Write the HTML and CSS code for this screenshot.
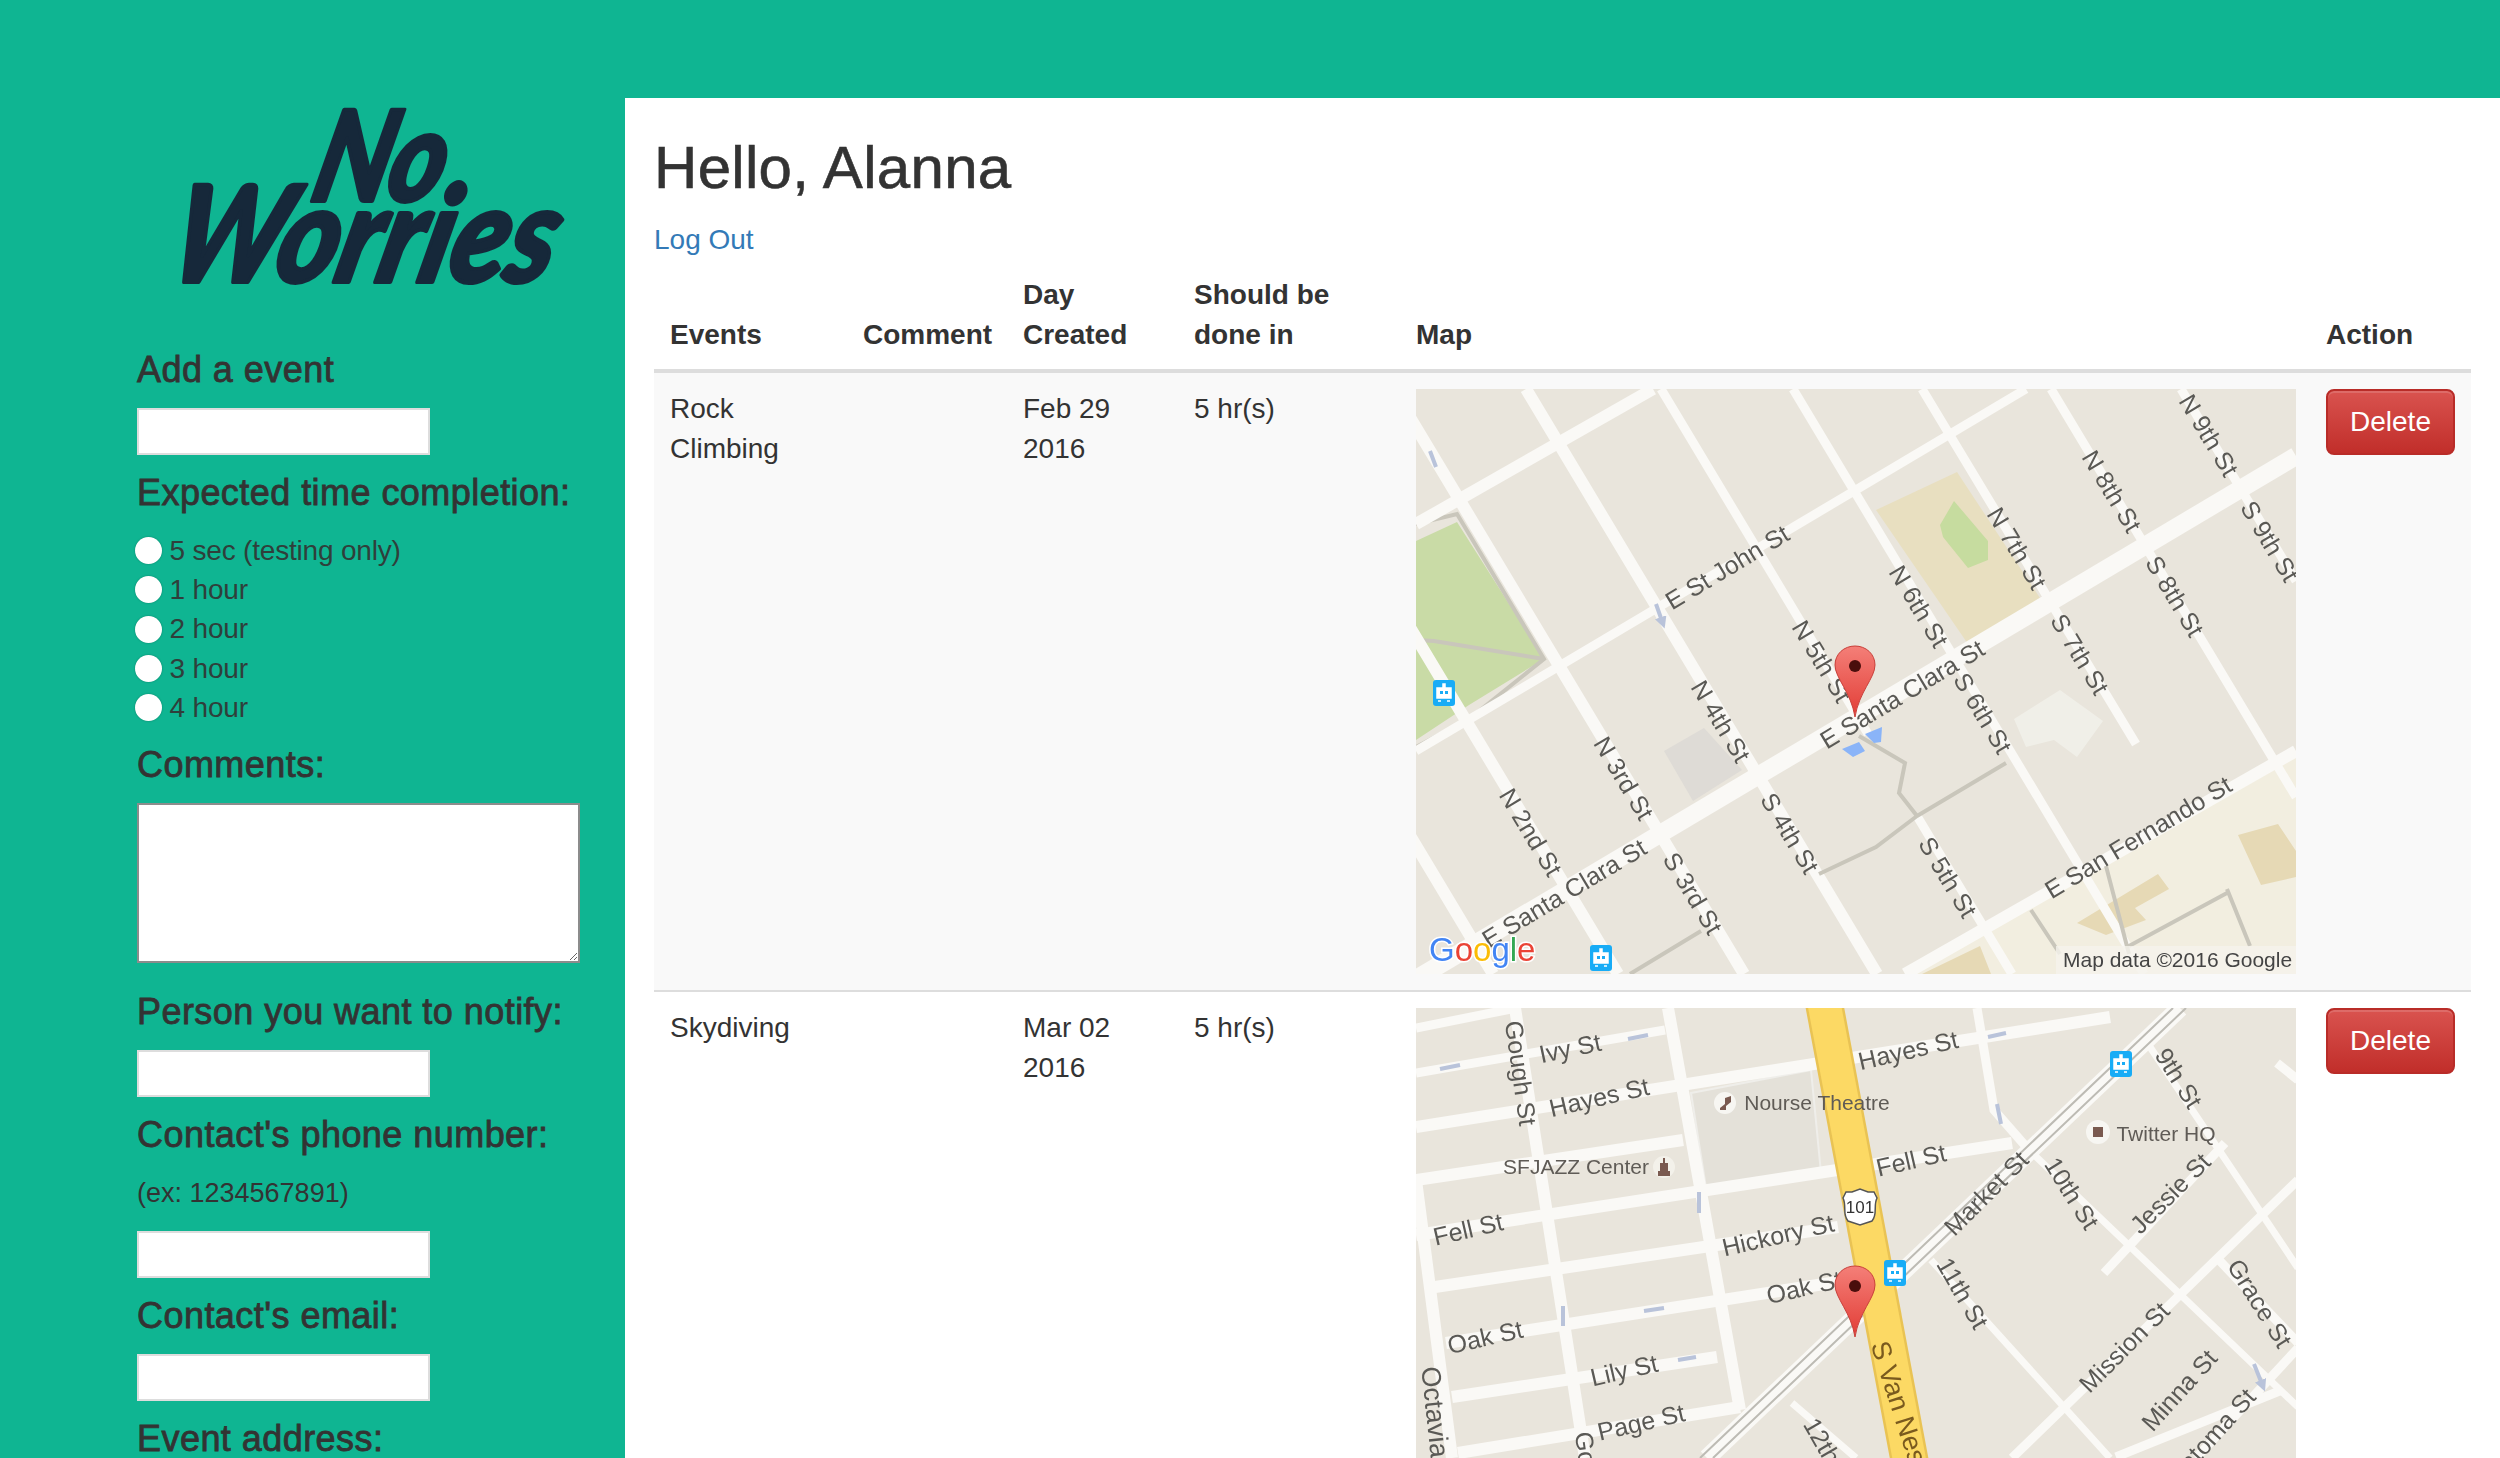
FILE: index.html
```html
<!DOCTYPE html>
<html lang="en">
<head>
  <meta charset="UTF-8">
  <title>No Worries</title>
  <link rel="stylesheet" href="styles.css">
</head>
<body>

<div class="topbar"></div>

<div class="page">
  <aside class="sidebar">
    <svg class="logo" width="488" height="220" viewBox="0 0 488 220">
      <text class="logo-text" transform="translate(171 103) skewX(-14)" font-size="126" textLength="130" lengthAdjust="spacingAndGlyphs">No</text>
      <text class="logo-text" transform="translate(27 184) skewX(-14)" font-size="134" textLength="384" lengthAdjust="spacingAndGlyphs">Worries</text>
    </svg>

    <form class="event-form">
      <h4>Add a event</h4>
      <input type="text">

      <h4>Expected time completion:</h4>
      <div class="radios">
        <label><input type="radio" name="time"> 5 sec (testing only)</label>
        <label><input type="radio" name="time"> 1 hour</label>
        <label><input type="radio" name="time"> 2 hour</label>
        <label><input type="radio" name="time"> 3 hour</label>
        <label><input type="radio" name="time"> 4 hour</label>
      </div>

      <h4>Comments:</h4>
      <textarea></textarea>

      <h4 class="after-textarea">Person you want to notify:</h4>
      <input type="text">

      <h4>Contact's phone number:</h4>
      <p class="hint">(ex: 1234567891)</p>
      <input type="text">

      <h4>Contact's email:</h4>
      <input type="text">

      <h4>Event address:</h4>
      <input type="text">
    </form>
  </aside>

  <main class="content">
    <h2>Hello, Alanna</h2>
    <p class="logout"><a href="#">Log Out</a></p>

    <table class="events">
      <colgroup>
        <col class="col-event"><col class="col-comment"><col class="col-day"><col class="col-done"><col class="col-map"><col class="col-action">
      </colgroup>
      <thead>
        <tr>
          <th>Events</th><th>Comment</th><th>Day Created</th><th>Should be done in</th><th>Map</th><th>Action</th>
        </tr>
      </thead>
      <tbody>
        <tr class="odd">
          <td>Rock Climbing</td>
          <td></td>
          <td>Feb 29 2016</td>
          <td>5 hr(s)</td>
          <td>
            <svg class="map" width="880" height="585" viewBox="0 0 880 585">
              <defs>
                <linearGradient id="pin-fill" x1="0" y1="0" x2="0" y2="1">
                  <stop offset="0" stop-color="#f47f78"/>
                  <stop offset="1" stop-color="#e23d36"/>
                </linearGradient>
                <g id="pin">
                  <path d="M0 71C-4 46 -20 32 -20 19C-20 8 -11 0 0 0C11 0 20 8 20 19C20 32 4 46 0 71Z" fill="url(#pin-fill)" stroke="#c9403a" stroke-width="1"/>
                  <circle cx="0" cy="20" r="6" fill="#4a0e0c"/>
                </g>
                <g id="tram">
                  <rect x="-11" y="-13" width="22" height="26" rx="3" fill="#18acf6"/>
                  <path d="M-7 -5H7V5H-7ZM-1 -9H1V-5H-1ZM-6 8H-3M3 8H6" fill="#fff" stroke="#fff" stroke-width="1.5"/>
                  <path d="M-4 -2H-1V1H-4ZM1 -2H4V1H1Z" fill="#18acf6"/>
                </g>
                <marker id="head" markerWidth="3" markerHeight="3" refX="1" refY="1.5" orient="auto">
                  <path d="M0 0L3 1.5L0 3Z" fill="#b9c3da"/>
                </marker>
              </defs>
              <rect width="880" height="585" fill="#e9e5dc"/>
              <polygon class="park" points="0,152 41,133 116,251 128,270 53,316 0,351"/>
              <path class="walk" d="M0 135L41 125L128 270L53 330L0 358M0 251L18 252L128 270"/>
              <polygon class="tan" points="460,121 541,83 624,209 552,255"/>
              <polygon class="park-dark" points="524,136 538,112 572,152 572,171 552,179 527,148"/>
              <polygon fill="#dedbd6" points="248,362 288,339 326,381 277,412"/>
              <polygon fill="#f0efe8" points="598,330 644,301 687,332 661,368 638,351 610,358"/>
              <polygon fill="#f2eee0" points="489,585 633,504 880,362 880,585"/>
              <path fill="#e6d9b5" d="M822 446L862 435L880 462V488L845 496ZM661 534L742 485L753 500L719 519L730 531L690 546ZM506 585L564 557L575 585Z"/>

              <path class="road w12" d="M0 135L237 0"/>
              <path class="road w9" d="M0 362L610 0"/>
              <path class="road w12" d="M-274 0L77 585M-149 0L202 585M-23 0L328 585M110 0L461 585"/>
              <path class="road w9" d="M245 0L452 345M501 427L596 585M377 0L728 585M506 0L720 355M635 0L880 408M765 0L880 192"/>
              <path class="road w18" d="M0 590L880 67"/>
              <path class="road w12" d="M489 585L880 362"/>
              <path class="walk" d="M443 347L489 374L483 404L501 427L460 458L403 485M501 427L590 374M214 585L285 542M690 477L713 565M811 504L713 557M811 500L834 557M615 521L644 565"/>
              <path class="arrow" d="M20 78L14 62M240 215L246 232"/>

              <polygon fill="#8ab4f8" points="426,360 443,353 449,362 437,368"/>
              <polygon fill="#8ab4f8" points="449,345 466,338 465,353 458,354"/>

              <text class="label" transform="translate(311 178) rotate(-31)">E St John St</text>
              <text class="label" transform="translate(406 272) rotate(59)">N 5th St</text>
              <text class="label" transform="translate(503 217) rotate(59)">N 6th St</text>
              <text class="label" transform="translate(601 159) rotate(59)">N 7th St</text>
              <text class="label" transform="translate(696 102) rotate(59)">N 8th St</text>
              <text class="label" transform="translate(793 46) rotate(59)">N 9th St</text>
              <text class="label" transform="translate(854 152) rotate(59)">S 9th St</text>
              <text class="label" transform="translate(759 207) rotate(59)">S 8th St</text>
              <text class="label" transform="translate(664 265) rotate(59)">S 7th St</text>
              <text class="label" transform="translate(567 324) rotate(59)">S 6th St</text>
              <text class="label" transform="translate(305 332) rotate(59)">N 4th St</text>
              <text class="label" transform="translate(208 389) rotate(59)">N 3rd St</text>
              <text class="label" transform="translate(115 443) rotate(59)">N 2nd St</text>
              <text class="label" transform="translate(277 504) rotate(59)">S 3rd St</text>
              <text class="label" transform="translate(374 444) rotate(59)">S 4th St</text>
              <text class="label" transform="translate(532 488) rotate(59)">S 5th St</text>
              <text class="label" transform="translate(486 305) rotate(-31)">E Santa Clara St</text>
              <text class="label" transform="translate(148 504) rotate(-31)">E Santa Clara St</text>
              <text class="label" transform="translate(722 448) rotate(-31)">E San Fernando St</text>

              <use href="#tram" x="28" y="304"/>
              <use href="#tram" x="185" y="569"/>
              <use href="#pin" x="439" y="257"/>

              <rect x="640" y="557" width="240" height="28" fill="#f5f3ec" fill-opacity="0.8"/>
              <text class="map-data" x="647" y="578">Map data ©2016 Google</text>
              <text class="google" x="13" y="572"><tspan fill="#4285f4">G</tspan><tspan fill="#ea4335">o</tspan><tspan fill="#fbbc05">o</tspan><tspan fill="#4285f4">g</tspan><tspan fill="#34a853">l</tspan><tspan fill="#ea4335">e</tspan></text>
            </svg>
          </td>
          <td><button class="btn-delete">Delete</button></td>
        </tr>
        <tr>
          <td>Skydiving</td>
          <td></td>
          <td>Mar 02 2016</td>
          <td>5 hr(s)</td>
          <td>
            <svg class="map" width="880" height="585" viewBox="0 0 880 585">
              <rect width="880" height="585" fill="#e9e5dc"/>
              <path class="block" d="M275 85L395 62L405 165L290 180Z"/>
              <path class="road w9" d="M0 65L249 22M0 20L100 0"/>
              <path class="road w12" d="M0 119L694 9M0 172L267 132"/>
              <path class="road w12" d="M0 227L596 135M19 279L422 219M30 335L434 272M36 389L301 349M42 445L324 399"/>
              <path class="road w12" d="M99 0L169 450M0 172L36 450M252 0L324 402"/>
              <path class="road w9" d="M561 0L578 102L613 142"/>
              <path class="road w7" d="M613 142L882 399M515 252L694 450M376 395L440 450M734 39L882 260"/>
              <path class="road w9" d="M596 450L882 172M700 449L866 382M688 265L809 135M803 252L882 335M861 55L882 72M780 450L882 340"/>
              <path class="road w18" d="M764 0L291 450"/>
              <path class="rail" d="M757 0L284 450M770 0L297 450"/>
              <path d="M408 -5L494 455" stroke="#e9c354" stroke-width="38" fill="none"/>
              <path d="M408 -5L494 455" stroke="#fcd964" stroke-width="33" fill="none"/>
              <path class="arrow" d="M232 27L212 31M44 57L24 61M228 303L248 300M262 352L280 349M590 25L572 29M581 96L585 116M283 205L283 184M147 298L147 318M838 356L846 376"/>

              <text class="label" transform="translate(154 40) rotate(-12)">Ivy St</text>
              <text class="label" transform="translate(105 65) rotate(82)">Gough St</text>
              <text class="label" transform="translate(183 89) rotate(-13)">Hayes St</text>
              <text class="label" transform="translate(492 42) rotate(-13)">Hayes St</text>
              <text class="label" transform="translate(495 152) rotate(-13)">Fell St</text>
              <text class="label" transform="translate(52 221) rotate(-13)">Fell St</text>
              <text class="label" transform="translate(362 227) rotate(-13)">Hickory St</text>
              <text class="label" transform="translate(388 279) rotate(-13)">Oak St</text>
              <text class="label" transform="translate(69 329) rotate(-13)">Oak St</text>
              <text class="label" transform="translate(208 362) rotate(-13)">Lily St</text>
              <text class="label" transform="translate(225 414) rotate(-13)">Page St</text>
              <text class="label label-lg" transform="translate(19 404) rotate(84)">Octavia</text>
              <text class="label" transform="translate(175 476) rotate(82)">Gough St</text>
              <text class="label" transform="translate(570 185) rotate(-45)">Market St</text>
              <text class="label" transform="translate(656 185) rotate(58)">10th St</text>
              <text class="label" transform="translate(763 70) rotate(58)">9th St</text>
              <text class="label" transform="translate(547 285) rotate(60)">11th St</text>
              <text class="label" transform="translate(414 446) rotate(60)">12th St</text>
              <text class="label" transform="translate(754 185) rotate(-45)">Jessie St</text>
              <text class="label" transform="translate(708 339) rotate(-45)">Mission St</text>
              <text class="label" transform="translate(763 382) rotate(-48)">Minna St</text>
              <text class="label" transform="translate(844 295) rotate(58)">Grace St</text>
              <text class="label" transform="translate(795 428) rotate(-48)">Natoma St</text>
              <text class="label van-ness" transform="translate(463 334) rotate(72)">S Van Ness Ave</text>
              <text class="poi" x="401" y="102">Nourse Theatre</text>
              <text class="poi" x="160" y="166">SFJAZZ Center</text>
              <text class="poi" x="750" y="133">Twitter HQ</text>

              <circle cx="309" cy="95" r="11" fill="#f7f6f2"/>
              <path d="M304 100L309 96V90L315 88V94L310 98V102H304Z" fill="#7a5a50"/>
              <circle cx="248" cy="159" r="11" fill="#f3f1ea"/>
              <path d="M242 168V163H244V155H247V150H249V155H252V163H254V168Z" fill="#7a5a50"/>
              <circle cx="682" cy="124" r="12" fill="#f7f6f2"/>
              <rect x="677" y="119" width="10" height="10" fill="#7a5a50"/>

              <path d="M430 184H436L444 181L452 184H458L461 190C457 198 462 206 456 213L444 217L432 213C426 206 431 198 427 190Z" fill="#fff" stroke="#555" stroke-width="1.5"/>
              <text class="shield" x="444" y="205">101</text>

              <use href="#tram" x="705" y="56"/>
              <use href="#tram" x="479" y="265"/>
              <use href="#pin" x="439" y="258"/>
            </svg>
          </td>
          <td><button class="btn-delete">Delete</button></td>
        </tr>
      </tbody>
    </table>
  </main>
</div>

</body>
</html>
```

FILE: styles.css
```css
* { box-sizing: border-box; }
html, body { margin: 0; height: 100%; overflow: hidden; }
body { font-family: "Liberation Sans", Arial, sans-serif; font-size: 28px; line-height: 40px; color: #333; background: #0fb592; }

.topbar { height: 98px; background: #0fb592; }
.page { display: flex; height: calc(100vh - 98px); overflow: hidden; }

/* sidebar */
.sidebar { width: 625px; flex: none; background: #0fb592; padding: 0 0 0 137px; }
.logo { display: block; margin: 0 0 32px 0; overflow: visible; }
.logo-text { font-family: Lato, "Open Sans", sans-serif; font-weight: 900; font-style: italic; fill: #16283a; stroke: #16283a; stroke-width: 4px; stroke-linejoin: round; }

.event-form { display: flex; flex-direction: column; align-items: flex-start; gap: 18px; }
.event-form h4 { margin: 0; height: 40px; font-size: 36px; line-height: 40px; font-weight: 400; letter-spacing: .45px; -webkit-text-stroke: .8px #333; white-space: nowrap; }
.event-form input[type="text"] { width: 293px; height: 47px; flex: none; padding: 0 6px; background: #fff; border: 2px solid #ddd; border-radius: 0; outline: none; }
.event-form textarea { display: block; width: 443px; height: 160px; flex: none; background: #fff; border: 2px solid #8c8c8c; border-radius: 0; outline: none; }
.event-form .after-textarea { margin-top: 11px; }
.hint { margin: 0; font-size: 27px; line-height: 40px; }

.radios { display: flex; flex-direction: column; margin-left: -2px; }
.radios label { display: flex; align-items: center; height: 39.3px; white-space: pre; letter-spacing: -.2px; color: #2f3f3b; }
.radios input { appearance: none; width: 27px; height: 27px; margin: 0; flex: none; background: #fff; border-radius: 50%; box-shadow: 0 0 2px rgba(0,0,0,.3); }

/* main */
.content { flex: 1; background: #fff; padding: 0 29px; overflow: hidden; }
.content h2 { margin: 37px 0 19px; font-size: 60px; line-height: 66px; font-weight: 400; letter-spacing: .3px; -webkit-text-stroke: .6px #333; }
.logout { margin: 0; height: 39px; }
.logout a { color: #337ab7; text-decoration: none; }

.events { width: 1817px; table-layout: fixed; border-collapse: collapse; }
.col-event { width: 193px; }
.col-comment { width: 160px; }
.col-day { width: 171px; }
.col-done { width: 222px; }
.col-map { width: 910px; }
.col-action { width: 161px; }
.events th { padding: 16px 16px 14px; text-align: left; vertical-align: bottom; font-weight: 700; border-bottom: 4px solid #ddd; }
.events td { padding: 16px; vertical-align: top; border-top: 2px solid #ddd; }
.events thead + tbody tr:first-child td { border-top: 0; }
.events .odd td { background: #f9f9f9; }

.btn-delete { display: block; width: 129px; height: 66px; padding: 0; font: inherit; color: #fff; border: 2px solid #b92c28; border-radius: 8px; background: linear-gradient(to bottom, #d9534f, #c12e2a); box-shadow: inset 0 2px 0 rgba(255,255,255,.15); }

/* maps */
.map { display: block; filter: blur(.7px); }
.road { fill: none; stroke: #faf9f6; stroke-linecap: butt; }
.w7 { stroke-width: 7px; }
.w9 { stroke-width: 9px; }
.w12 { stroke-width: 12px; }
.w18 { stroke-width: 18px; }
.rail { fill: none; stroke: #bdbbb4; stroke-width: 2px; }
.walk { fill: none; stroke: #c9c6bb; stroke-width: 4px; }
.park { fill: #c9dba6; }
.park-dark { fill: #c6dc9f; }
.tan { fill: #e8dfc0; }
.block { fill: #e4e1d9; stroke: #efeeea; stroke-width: 2px; }
.arrow { fill: none; stroke: #b9c3da; stroke-width: 4px; marker-end: url(#head); }
.label { font-size: 25px; fill: #5a5955; text-anchor: middle; dominant-baseline: central; }
.label-lg { font-size: 27px; }
.van-ness { fill: #7a5a1e; text-anchor: start; font-size: 27px; }
.poi { font-size: 21px; fill: #5f5b56; text-anchor: middle; }
.shield { font-size: 17px; fill: #333; text-anchor: middle; }
.map-data { font-size: 21px; fill: #444; }
.google { font-size: 33px; paint-order: stroke; stroke: #fff; stroke-width: 3px; }
```
